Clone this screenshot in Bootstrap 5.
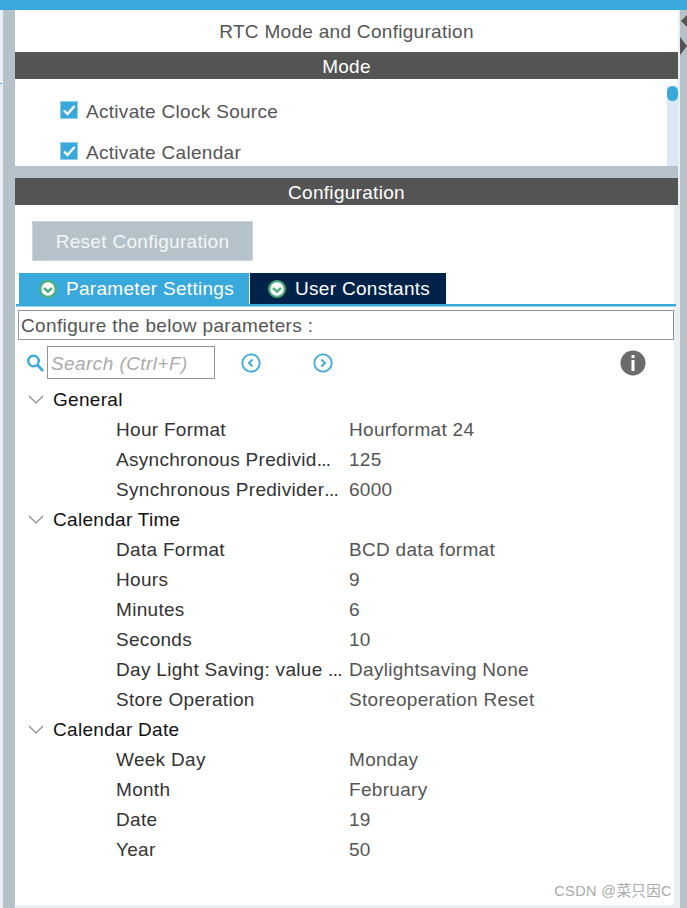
<!doctype html>
<html lang="en">
<head>
<meta charset="utf-8">
<title>RTC Mode and Configuration</title>
<link href="https://cdn.jsdelivr.net/npm/bootstrap@5.3.0/dist/css/bootstrap.min.css" rel="stylesheet">
<style>
html,body{height:908px;overflow:hidden}
body{position:relative;font-family:"Liberation Sans",Arial,"Noto Sans CJK SC",sans-serif;font-size:19px;letter-spacing:.3px;line-height:30px;color:#555;background:#fff}
.topbar{height:10px;background:#39a9dc}
.shell{height:898px;background:#eceff1}
.edgemark{position:absolute;left:0;top:83px;width:2px;height:1px;background:#39a9dc}
.gut-left{width:12px;margin-left:3px;background:#b6c2c9}
.gut-right{width:7px;background:#b6c2c9;padding-top:5px}
.gut-right svg{display:block}
.upper{width:663px;background:#fff}
.centerpane{width:665px}
.title{height:42px;line-height:44px;text-align:center;color:#555}
.bandhead{height:27px;line-height:29px;background:#535453;color:#fff;text-align:center}
.modepane{height:87px;overflow:hidden;background:#fff}
.modelist{padding:12px 0 0 45px}
.checkrow{height:41px;line-height:42px;gap:8px}
.tick{width:18px;height:18px;flex:none;margin-top:-3px}
.scrolltrack{width:11px;margin-top:7px;background:#d9e8f5}
.scrollthumb{height:15px;background:#39a9dc;border-radius:6px}
.sep{height:12px;background:#b6c2c9;width:663px}
.confpane{position:relative;height:700px;padding-top:16px;background:#fff;width:659px}
.confhead{width:663px}
.resetbtn{display:block;margin:0 0 0 17px;width:221px;height:40px;padding:0;border:1px solid #ccd5da;border-radius:0;background:#b6c2c9;color:#f4f6f7;font-size:19px;letter-spacing:.3px;line-height:40px}
.tabstrip{margin:12px 0 0 4px;height:31px;gap:1px}
.tabitem{height:31px;line-height:30px;color:#fff;gap:9px}
.tab-a{width:230px;background:#39a9dc;padding-left:20px}
.tab-b{width:196px;background:#012249;padding-left:18px}
.rule{margin-left:1px;width:660px;height:3px;border-top:2px solid #39a9dc;border-bottom:1px solid #9fd3ec}
.descbox{margin:3px 0 0 3px;width:656px;height:30px;line-height:30px;border:1px solid #8f9598;padding-left:2px;white-space:nowrap;letter-spacing:.36px}
.toolrow{height:33px;margin:6px 0 0 12px}
.searchbox{margin-left:3px;width:168px;height:33px;line-height:33px;border:1px solid #8f9598;padding-left:3px;color:#aaa;font-style:italic;letter-spacing:.42px}
.nav-a{margin-left:26px}
.nav-b{margin-left:52px}
.info-i{margin-left:287px}
.tree{margin-top:5px}
.treerow{height:30px;line-height:31px;white-space:nowrap}
.caret{width:16px;margin:0 9px 0 13px;flex:none}
.catname{color:#111}
.pname{margin-left:101px;width:233px;color:#333;overflow:hidden}
.dots{letter-spacing:-.7px}
.pval{color:#555}
.stamp{position:absolute;right:2px;bottom:4px;font-size:14.5px;letter-spacing:.4px;line-height:20px;color:#aaa}
</style>
</head>
<body>
<div class="topbar"></div>
<div class="edgemark"></div>
<div class="shell d-flex">
  <div class="gut-left flex-shrink-0"></div>
  <div class="centerpane flex-shrink-0">
    <div class="upper">
      <div class="title">RTC Mode and Configuration</div>
      <div class="bandhead">Mode</div>
      <div class="modepane d-flex justify-content-between">
        <div class="modelist">
          <div class="checkrow d-flex align-items-center"><svg class="tick" viewBox="0 0 18 18"><rect x=".5" y=".5" width="17" height="17" fill="#39a9dc" stroke="#8ed0ee"/><path d="M4 9.5l3.5 3.5L14.5 5" fill="none" stroke="#fff" stroke-width="2.4"/></svg>Activate Clock Source</div>
          <div class="checkrow d-flex align-items-center"><svg class="tick" viewBox="0 0 18 18"><rect x=".5" y=".5" width="17" height="17" fill="#39a9dc" stroke="#8ed0ee"/><path d="M4 9.5l3.5 3.5L14.5 5" fill="none" stroke="#fff" stroke-width="2.4"/></svg>Activate Calendar</div>
        </div>
        <div class="scrolltrack"><div class="scrollthumb"></div></div>
      </div>
      <div class="sep"></div>
      <div class="bandhead confhead">Configuration</div>
    </div>
    <div class="confpane">
      <button class="btn resetbtn" type="button">Reset Configuration</button>
      <div class="tabstrip d-flex">
        <div class="tabitem tab-a d-flex align-items-center">
          <svg width="18" height="18" viewBox="0 0 18 18"><circle cx="9" cy="9" r="7.8" fill="#fff" stroke="#4caf78" stroke-width="2.2"/><path d="M5 8l4 3.6L13 8" fill="none" stroke="#4caf78" stroke-width="2.4"/></svg>Parameter Settings</div>
        <div class="tabitem tab-b d-flex align-items-center">
          <svg width="18" height="18" viewBox="0 0 18 18"><circle cx="9" cy="9" r="7.8" fill="#fff" stroke="#4caf78" stroke-width="2.2"/><path d="M5 8l4 3.6L13 8" fill="none" stroke="#4caf78" stroke-width="2.4"/></svg>User Constants</div>
      </div>
      <div class="rule"></div>
      <div class="descbox">Configure the below parameters :</div>
      <div class="toolrow d-flex align-items-center">
        <svg width="17" height="18" viewBox="0 0 17 18"><circle cx="6.5" cy="7" r="5.3" fill="none" stroke="#39a9dc" stroke-width="2.4"/><path d="M10.5 11l5.5 6" stroke="#39a9dc" stroke-width="2.6"/></svg>
        <div class="searchbox">Search (Ctrl+F)</div>
        <svg class="nav-a" width="20" height="20" viewBox="0 0 20 20"><circle cx="10" cy="10" r="8.7" fill="none" stroke="#39a9dc" stroke-width="1.8"/><path d="M11.5 6.5L8 10l3.5 3.5" fill="none" stroke="#39a9dc" stroke-width="1.8"/></svg>
        <svg class="nav-b" width="20" height="20" viewBox="0 0 20 20"><circle cx="10" cy="10" r="8.7" fill="none" stroke="#39a9dc" stroke-width="1.8"/><path d="M8.5 6.5L12 10l-3.5 3.5" fill="none" stroke="#39a9dc" stroke-width="1.8"/></svg>
        <svg class="info-i" width="26" height="26" viewBox="0 0 26 26"><circle cx="13" cy="13" r="12.5" fill="#6b6b6b"/><rect x="11.5" y="5" width="3" height="3" fill="#fff"/><rect x="11.5" y="10" width="3" height="11" fill="#fff"/></svg>
      </div>
      <div class="tree">
        <div class="treerow d-flex align-items-center"><svg class="caret" height="9" viewBox="0 0 16 9"><path d="M1 1l7 7 7-7" fill="none" stroke="#888" stroke-width="1.2"/></svg><span class="catname">General</span></div>
        <div class="treerow d-flex"><span class="pname">Hour Format</span><span class="pval">Hourformat 24</span></div>
        <div class="treerow d-flex"><span class="pname">Asynchronous Predivid<span class="dots">...</span></span><span class="pval">125</span></div>
        <div class="treerow d-flex"><span class="pname">Synchronous Predivider<span class="dots">...</span></span><span class="pval">6000</span></div>
        <div class="treerow d-flex align-items-center"><svg class="caret" height="9" viewBox="0 0 16 9"><path d="M1 1l7 7 7-7" fill="none" stroke="#888" stroke-width="1.2"/></svg><span class="catname">Calendar Time</span></div>
        <div class="treerow d-flex"><span class="pname">Data Format</span><span class="pval">BCD data format</span></div>
        <div class="treerow d-flex"><span class="pname">Hours</span><span class="pval">9</span></div>
        <div class="treerow d-flex"><span class="pname">Minutes</span><span class="pval">6</span></div>
        <div class="treerow d-flex"><span class="pname">Seconds</span><span class="pval">10</span></div>
        <div class="treerow d-flex"><span class="pname">Day Light Saving: value <span class="dots">...</span></span><span class="pval">Daylightsaving None</span></div>
        <div class="treerow d-flex"><span class="pname">Store Operation</span><span class="pval">Storeoperation Reset</span></div>
        <div class="treerow d-flex align-items-center"><svg class="caret" height="9" viewBox="0 0 16 9"><path d="M1 1l7 7 7-7" fill="none" stroke="#888" stroke-width="1.2"/></svg><span class="catname">Calendar Date</span></div>
        <div class="treerow d-flex"><span class="pname">Week Day</span><span class="pval">Monday</span></div>
        <div class="treerow d-flex"><span class="pname">Month</span><span class="pval">February</span></div>
        <div class="treerow d-flex"><span class="pname">Date</span><span class="pval">19</span></div>
        <div class="treerow d-flex"><span class="pname">Year</span><span class="pval">50</span></div>
      </div>
      <div class="stamp">CSDN @菜只因C</div>
    </div>
  </div>
  <div class="flex-grow-1 d-flex justify-content-end"><div class="gut-right"><svg width="7" height="40" viewBox="0 0 7 40"><path d="M7 0v12L1 6z" fill="#535453"/><path d="M0 22l7 9-7 9z" fill="#535453"/></svg></div></div>
</div>
<script src="https://cdn.jsdelivr.net/npm/bootstrap@5.3.0/dist/js/bootstrap.bundle.min.js"></script>
</body>
</html>
